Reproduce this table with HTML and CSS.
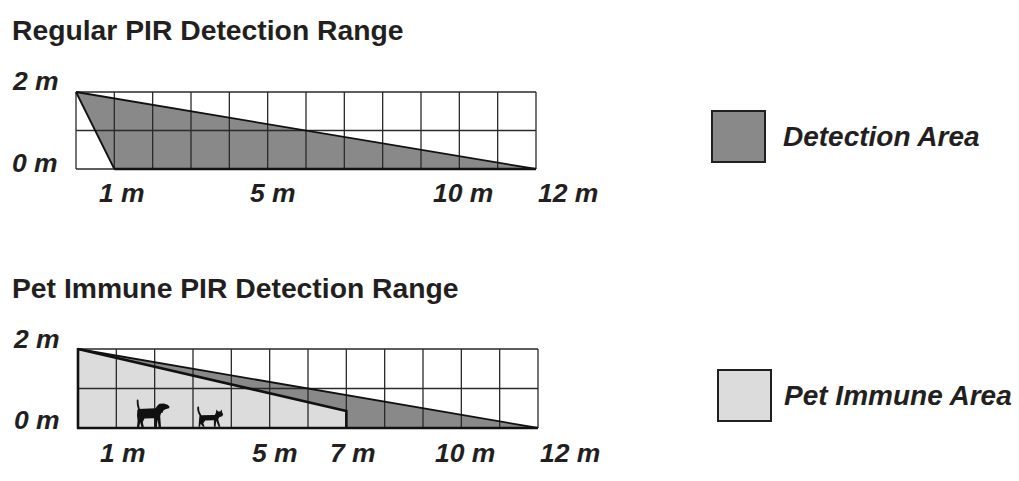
FILE: index.html
```html
<!DOCTYPE html>
<html lang="en">
<head>
<meta charset="utf-8">
<title>PIR Detection Range</title>
<link rel="stylesheet" href="styles.css">
</head>
<body>
<section class="panel panel-regular">
  <h2 class="title">Regular PIR Detection Range</h2>
  <div class="row">
    <svg class="chart" width="620" height="170" viewBox="0 0 620 170" xmlns="http://www.w3.org/2000/svg">
      <polygon class="fill-dark" points="76,46 114.33,123 536,123"/>
      <path class="grid" d="M76 46H536M76 84.5H536M76 123H536M76 46V123M114.33 46V123M152.67 46V123M191 46V123M229.33 46V123M267.67 46V123M306 46V123M344.33 46V123M382.67 46V123M421 46V123M459.33 46V123M497.67 46V123M536 46V123"/>
      <path class="edge" d="M76 46L114.33 123M76 46L536 123"/>
      <path class="edge-thick" d="M114.33 123H536"/>
      <text class="axis" x="13" y="44">2 m</text>
      <text class="axis" x="12" y="126">0 m</text>
      <text class="axis" x="99" y="156">1 m</text>
      <text class="axis" x="250" y="156">5 m</text>
      <text class="axis" x="433" y="156">10 m</text>
      <text class="axis" x="538" y="156">12 m</text>
    </svg>
    <div class="legend legend-detection">
      <span class="swatch swatch-dark"></span>
      <span class="legend-label">Detection Area</span>
    </div>
  </div>
</section>
<section class="panel panel-pet">
  <h2 class="title">Pet Immune PIR Detection Range</h2>
  <div class="row">
    <svg class="chart" width="620" height="177" viewBox="0 0 620 177" xmlns="http://www.w3.org/2000/svg">
      <polygon class="fill-light" points="78,45 346.33,107 346.33,124 78,124"/>
      <polygon class="fill-dark" points="78,45 538,124 346.33,124 346.33,107"/>
      <path class="grid" d="M78 45H538M78 84.5H538M78 124H538M78 45V124M116.33 45V124M154.67 45V124M193 45V124M231.33 45V124M269.67 45V124M308 45V124M346.33 45V124M384.67 45V124M423 45V124M461.33 45V124M499.67 45V124M538 45V124"/>
      <path class="edge" d="M78 45L538 124"/>
      <path class="edge-thick" d="M78 45L346.33 107V124M78 44V124.5M77 124H538"/>
      <g class="pet" transform="translate(136 96)">
        <path class="tail" d="M1.6 0.5C1.4 3 2 6 3 9.5"/>
        <path d="M2 9L19.5 8.2L21.5 5.5L23.5 3.8L28 3.6L31.5 4.8L33.6 6.4L33 8.3L29.5 9.2L27.5 10.5L25.3 12.5L24.2 16L25 27H22.6L21.6 19.5L20.8 27H18.6L18.4 18.2L8.5 18.4L6.8 22L7.8 27H5.5L4.2 22.5L3.2 27H1L1.6 20.5L1 15.5L1.3 10.5Z"/>
        <path d="M23.6 4.2L26.6 4.4L27 12.5L25 12.8Z"/>
      </g>
      <g class="pet" transform="translate(197 103)">
        <path class="tail" d="M1.2 0.5C0.8 3 1.8 6 3.5 8.5"/>
        <path d="M3 8.2L17.8 8L19 5.5L19.4 2.4L21.2 4.6H23.1L24.6 2.4L25.2 5.6L26.2 7.2L25.2 9.2L22.2 10.2L21.2 12.5L23.4 19.8H21.6L19.2 13.8L18.6 19.8H16.9L16.9 13.3L8.2 13.4L6.3 16.2L7.7 19.8H6L3.6 16.8L3.1 19.8H1.5L2 13.2L2.4 9.2Z"/>
      </g>
      <text class="axis" x="14" y="44">2 m</text>
      <text class="axis" x="14" y="125">0 m</text>
      <text class="axis" x="100" y="158">1 m</text>
      <text class="axis" x="252" y="158">5 m</text>
      <text class="axis" x="330" y="158">7 m</text>
      <text class="axis" x="435" y="158">10 m</text>
      <text class="axis" x="540" y="158">12 m</text>
    </svg>
    <div class="legend legend-pet">
      <span class="swatch swatch-light"></span>
      <span class="legend-label">Pet Immune Area</span>
    </div>
  </div>
</section>
</body>
</html>
```
FILE: styles.css
```css
html, body {
  margin: 0;
  padding: 0;
  background: #ffffff;
}

body {
  width: 1019px;
  height: 481px;
  overflow: hidden;
  font-family: "Liberation Sans", Arial, sans-serif;
  color: #231f20;
}

.panel-regular {
  padding-top: 14px;
}

.panel-pet {
  margin-top: 56px;
}

.title {
  margin: 0;
  padding-left: 12px;
  font-size: 28.3px;
  font-weight: bold;
  line-height: 32px;
}

.row {
  display: flex;
  align-items: flex-start;
}

.chart {
  display: block;
  flex: none;
}

.fill-dark {
  fill: #898989;
}

.fill-light {
  fill: #dcdcdc;
}

.grid {
  fill: none;
  stroke: #2a2a2a;
  stroke-width: 1.3;
}

.edge {
  fill: none;
  stroke: #111111;
  stroke-width: 1.8;
  stroke-linejoin: round;
}

.edge-thick {
  fill: none;
  stroke: #111111;
  stroke-width: 2.6;
}

.pet {
  fill: #111111;
}

.pet .tail {
  fill: none;
  stroke: #111111;
  stroke-width: 1.8;
  stroke-linecap: round;
}

.axis {
  font-family: "Liberation Sans", Arial, sans-serif;
  font-weight: bold;
  font-style: italic;
  font-size: 26.5px;
  fill: #231f20;
}

.legend {
  display: flex;
  align-items: center;
  flex: none;
}

.legend-detection {
  margin-top: 64px;
  margin-left: 91px;
}

.legend-pet {
  margin-top: 65px;
  margin-left: 97px;
}

.swatch {
  display: block;
  width: 55px;
  height: 53px;
  box-sizing: border-box;
  border: 2px solid #231f20;
}

.swatch-dark {
  background: #898989;
}

.swatch-light {
  background: #dcdcdc;
}

.legend-label {
  font-size: 28px;
  font-weight: bold;
  font-style: italic;
  line-height: 32px;
  white-space: nowrap;
}

.legend-detection .legend-label {
  margin-left: 17px;
}

.legend-pet .legend-label {
  margin-left: 12px;
}
```
